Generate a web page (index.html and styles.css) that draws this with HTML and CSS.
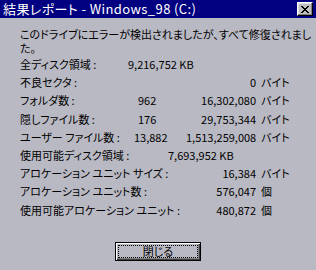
FILE: index.html
```html
<html>
<head>
    <meta charset="utf-8">
    <title>結果レポート - Windows_98 (C:)</title>
    <link rel="stylesheet" href="styles.css">
</head>
<body>
    <div class="window">
        <div class="titlebar">
            <span class="title">結果レポート - Windows_98 (C:)</span>
            <button class="close" aria-label="閉じる">
                <svg width="8" height="7" viewBox="0 0 8 7">
                    <path d="M0 0h2v1h1v1h2v-1h1v-1h2v1h-1v1h-1v1h-1v1h1v1h1v1h1v1h-2v-1h-1v-1h-2v1h-1v1h-2v-1h1v-1h1v-1h1v-1h-1v-1h-1v-1h-1z" fill="#000"/>
                </svg>
            </button>
        </div>

        <div class="content">
            <p class="message">このドライブにエラーが検出されましたが、すべて修復されまし<br>た。</p>

            <div class="stats">
                <span class="label">全ディスク領域 :</span>
                <span class="wide">9,216,752 KB</span>

                <span class="label span2">不良セクタ :</span>
                <span class="num">0</span><span class="unit">バイト</span>

                <span class="label">フォルダ数 :</span>
                <span class="mid mid-short">962</span>
                <span class="num">16,302,080</span><span class="unit">バイト</span>

                <span class="label">隠しファイル数 :</span>
                <span class="mid mid-short">176</span>
                <span class="num">29,753,344</span><span class="unit">バイト</span>

                <span class="label">ユーザー ファイル数 :</span>
                <span class="mid mid-long">13,882</span>
                <span class="num">1,513,259,008</span><span class="unit">バイト</span>

                <span class="label">使用可能ディスク領域 :</span>
                <span class="wide wide-far">7,693,952 KB</span>

                <span class="label span2">アロケーション ユニット サイズ :</span>
                <span class="num">16,384</span><span class="unit">バイト</span>

                <span class="label span2">アロケーション ユニット数 :</span>
                <span class="num">576,047</span><span class="unit">個</span>

                <span class="label span2">使用可能アロケーション ユニット :</span>
                <span class="num">480,872</span><span class="unit">個</span>
            </div>

            <div class="actions">
                <button class="btn"><span class="focus">閉じる</span></button>
            </div>
        </div>
    </div>
</body>
</html>
```

FILE: styles.css
```css
* {
    font-family: "Noto Sans CJK JP", "Noto Sans", sans-serif;
    font-feature-settings: "palt";
    box-sizing: border-box;
}

body {
    margin: 0;
    padding: 0;
    width: 316px;
    height: 270px;
    overflow: hidden;
}

.window {
    display: flex;
    flex-direction: column;
    width: 316px;
    height: 270px;
    background-color: #b9b9c3;
}

.titlebar {
    display: flex;
    align-items: center;
    justify-content: space-between;
    height: 18px;
    padding: 0 3px 0 3px;

    background-color: #000080;
}

.title {
    color: #ffffff;
    font-size: 13px;
    letter-spacing: 0.4px;
    line-height: 18px;
    white-space: nowrap;
}

.close {
    display: flex;
    align-items: center;
    justify-content: center;
    width: 16px;
    height: 14px;
    margin: 0;
    padding: 0;

    background-color: #c0c0c0;
    border: 1px solid;
    border-color: #ffffff #000000 #000000 #ffffff;
    box-shadow: inset -1px -1px 0 #808080, inset 1px 1px 0 #dfdfdf;
}

.content {
    flex: 1;
    padding: 10px 0 0 20px;
    color: #000000;
    font-size: 11px;
}

.message {
    margin: 0;
    line-height: 13.5px;
    white-space: nowrap;
}

.stats {
    display: grid;
    grid-template-columns: 108px 58px 70px auto;
    grid-auto-rows: 18.2px;
    align-items: center;
    line-height: 18px;
    white-space: nowrap;
}

.label {
    grid-column: 1;
}

.span2 {
    grid-column: 1 / span 2;
}

.wide {
    grid-column: 2 / span 3;
}

.wide-far {
    padding-left: 40px;
}

.mid-short {
    padding-left: 10px;
}

.mid-long {
    padding-left: 6px;
}

.num {
    grid-column: 3;
    text-align: right;
}

.unit {
    grid-column: 4;
    padding-left: 5px;
}

.actions {
    display: flex;
    padding-left: 95px;
    margin-top: 23px;
}

.btn {
    display: flex;
    align-items: center;
    justify-content: center;
    width: 86px;
    height: 19px;
    margin: 0;
    padding: 2px;

    background-color: #b9b9c3;
    border: 1px solid #000000;
    box-shadow: inset 1px 1px 0 #ffffff, inset -1px -1px 0 #404040, inset -2px -2px 0 #808080;

    font-size: 11px;
    color: #000000;
}

.focus {
    display: block;
    width: 100%;
    height: 100%;
    border: 1px dotted #000000;
    line-height: 11px;
    text-align: center;
}
```
